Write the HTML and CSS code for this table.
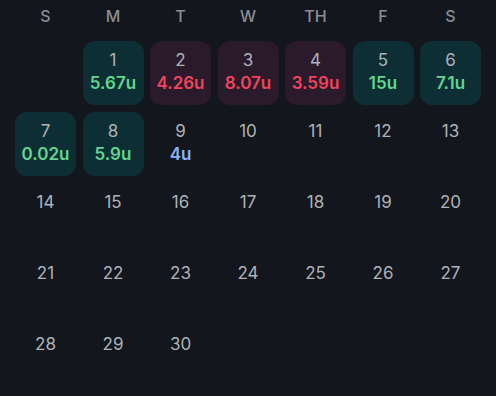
FILE: index.html
```html
<!DOCTYPE html>
<html>
<head>
<meta charset="utf-8">
<link rel="stylesheet" href="styles.css">
</head>
<body>
<div class="cal">
  <div class="head">
    <div>S</div><div>M</div><div>T</div><div>W</div><div>TH</div><div>F</div><div>S</div>
  </div>
  <div class="grid">
    <div class="cell"></div>
    <div class="cell win"><span class="d">1</span><span class="v">5.67u</span></div>
    <div class="cell loss"><span class="d">2</span><span class="v">4.26u</span></div>
    <div class="cell loss"><span class="d">3</span><span class="v">8.07u</span></div>
    <div class="cell loss"><span class="d">4</span><span class="v">3.59u</span></div>
    <div class="cell win"><span class="d">5</span><span class="v">15u</span></div>
    <div class="cell win"><span class="d">6</span><span class="v">7.1u</span></div>

    <div class="cell win"><span class="d">7</span><span class="v">0.02u</span></div>
    <div class="cell win"><span class="d">8</span><span class="v">5.9u</span></div>
    <div class="cell push"><span class="d">9</span><span class="v">4u</span></div>
    <div class="cell"><span class="d">10</span></div>
    <div class="cell"><span class="d">11</span></div>
    <div class="cell"><span class="d">12</span></div>
    <div class="cell"><span class="d">13</span></div>

    <div class="cell"><span class="d">14</span></div>
    <div class="cell"><span class="d">15</span></div>
    <div class="cell"><span class="d">16</span></div>
    <div class="cell"><span class="d">17</span></div>
    <div class="cell"><span class="d">18</span></div>
    <div class="cell"><span class="d">19</span></div>
    <div class="cell"><span class="d">20</span></div>

    <div class="cell"><span class="d">21</span></div>
    <div class="cell"><span class="d">22</span></div>
    <div class="cell"><span class="d">23</span></div>
    <div class="cell"><span class="d">24</span></div>
    <div class="cell"><span class="d">25</span></div>
    <div class="cell"><span class="d">26</span></div>
    <div class="cell"><span class="d">27</span></div>

    <div class="cell"><span class="d">28</span></div>
    <div class="cell"><span class="d">29</span></div>
    <div class="cell"><span class="d">30</span></div>
  </div>
</div>
</body>
</html>
```
FILE: styles.css
```css
html, body {
  margin: 0;
  padding: 0;
  background: #13161c;
  height: 100%;
}
body {
  font-family: Inter, "Noto Sans", sans-serif;
  overflow: hidden;
}
.cal {
  padding: 0 15px;
}
.head {
  display: grid;
  grid-template-columns: repeat(7, 1fr);
  column-gap: 6.5px;
  height: 41px;
  align-items: center;
  padding-bottom: 9px;
  box-sizing: border-box;
}
.head div {
  text-align: center;
  color: #8a8e96;
  font-size: 16px;
  font-weight: 500;
}
.grid {
  display: grid;
  grid-template-columns: repeat(7, 1fr);
  grid-auto-rows: 64px;
  column-gap: 6.5px;
  row-gap: 7px;
}
.cell {
  border-radius: 12px;
  display: flex;
  flex-direction: column;
  align-items: center;
  padding-top: 9px;
  box-sizing: border-box;
}
.cell .d {
  color: #aeb2b9;
  font-size: 17px;
  line-height: 21px;
  margin-bottom: 2px;
}
.cell .v {
  font-size: 17px;
  font-weight: 600;
  line-height: 21px;
}
.win { background: #0e2e36; }
.win .v { color: #62d68c; }
.loss { background: #2b1a2c; }
.loss .v { color: #f0455c; }
.push .v { color: #8ab4f8; }
```
